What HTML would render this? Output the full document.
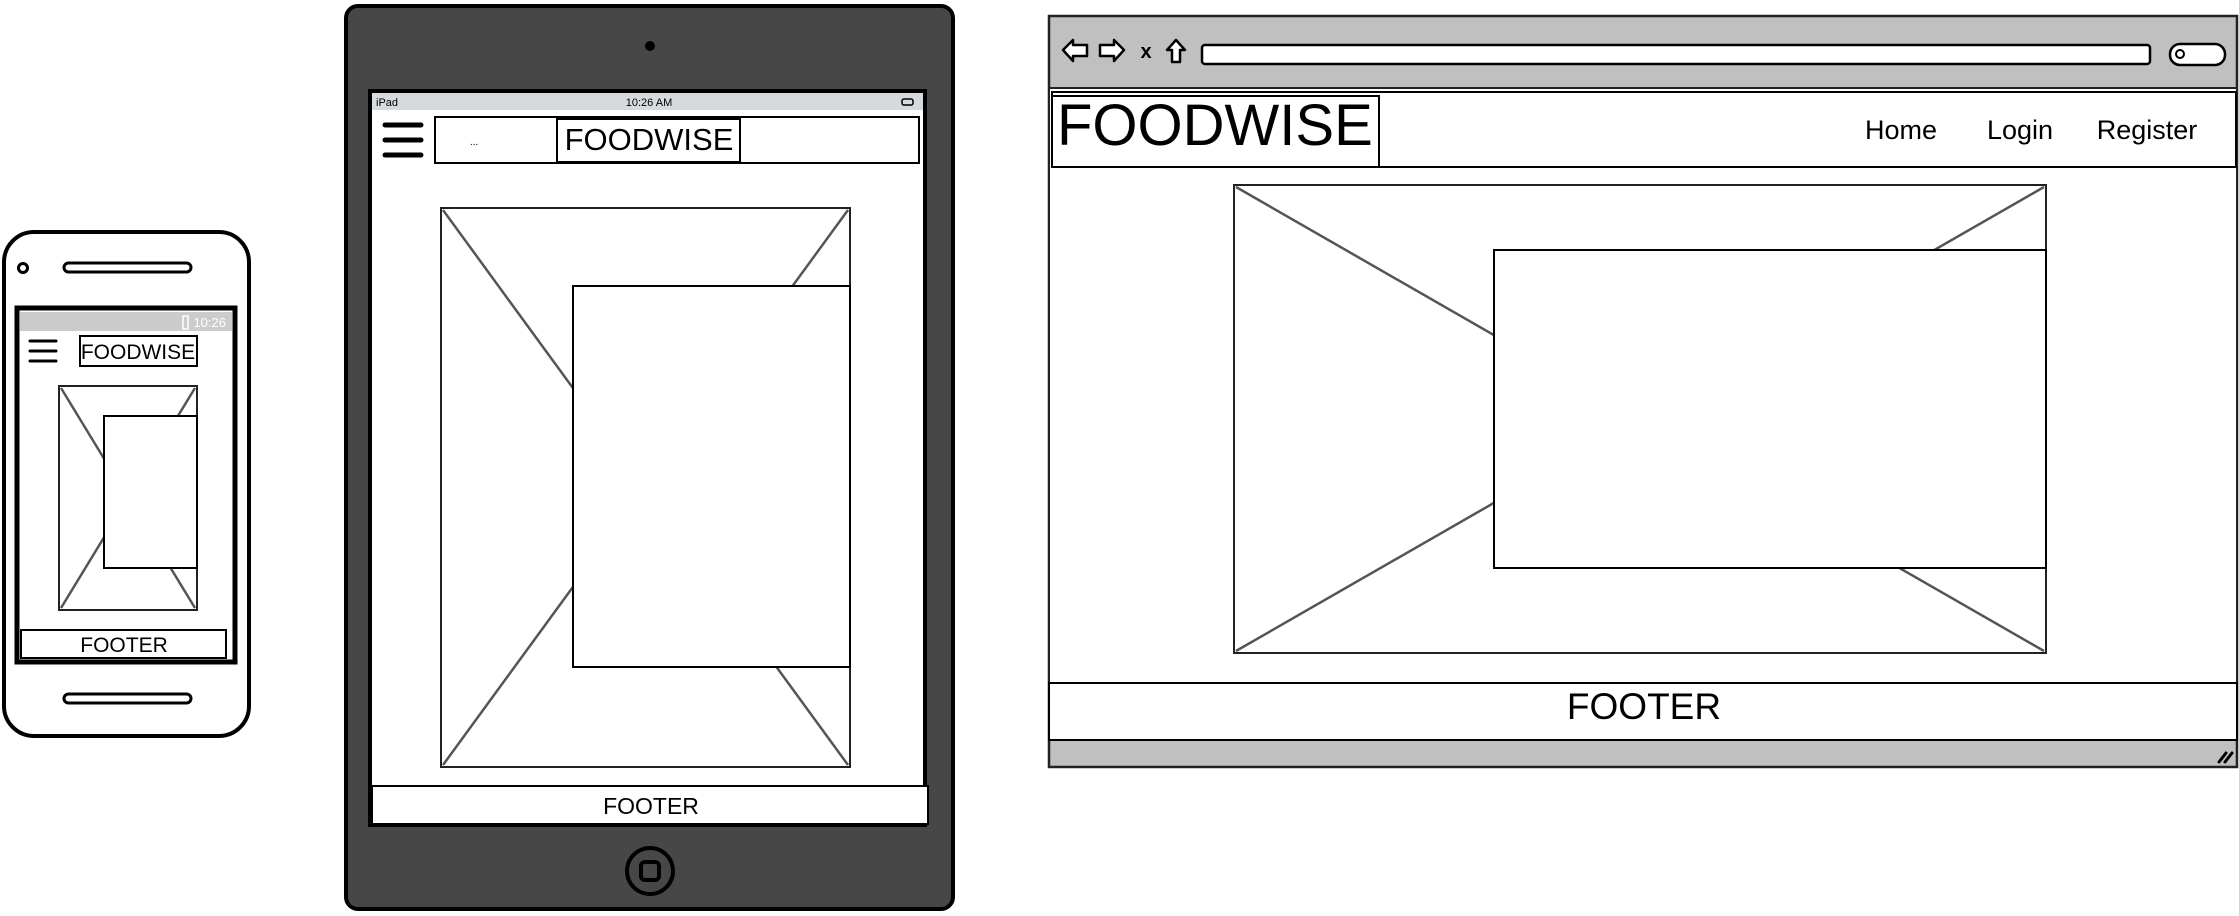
<!DOCTYPE html>
<html><head><meta charset="utf-8"><style>
html,body{margin:0;padding:0;background:#fff;width:2239px;height:916px;overflow:hidden}
svg{display:block}
text{font-family:"Liberation Sans",sans-serif;fill:#000}
</style></head><body>
<svg width="2239" height="916" viewBox="0 0 2239 916" xmlns="http://www.w3.org/2000/svg">
<!-- PHONE -->
<rect x="4" y="232" width="245" height="504" rx="30" fill="#fff" stroke="#000" stroke-width="4"/>
<circle cx="23" cy="268" r="4.5" fill="none" stroke="#000" stroke-width="3"/>
<rect x="64" y="263" width="127" height="9" rx="4.5" fill="#fff" stroke="#000" stroke-width="3"/>
<rect x="64" y="694" width="127" height="9" rx="4.5" fill="#fff" stroke="#000" stroke-width="3"/>
<rect x="17" y="308" width="218" height="354" fill="#fff" stroke="#000" stroke-width="5"/>
<rect x="20" y="312" width="212" height="19" fill="#cccccc"/>
<text x="226" y="327" font-size="13" fill="#fff" text-anchor="end" style="fill:#fff">10:26</text>
<rect x="183" y="316" width="5" height="13" fill="none" stroke="#fff" stroke-width="1.5"/>
<g stroke="#000" stroke-width="3" stroke-linecap="round"><line x1="30" y1="341" x2="56" y2="341"/><line x1="30" y1="351" x2="56" y2="351"/><line x1="30" y1="361" x2="56" y2="361"/></g>
<rect x="80" y="336" width="117" height="30" fill="#fff" stroke="#000" stroke-width="2"/>
<text x="138" y="359" font-size="21" text-anchor="middle">FOODWISE</text>
<rect x="59" y="386" width="138" height="224" fill="#fff" stroke="#222" stroke-width="2"/>
<g stroke="#555" stroke-width="2.5"><line x1="61" y1="388" x2="195" y2="608"/><line x1="195" y1="388" x2="61" y2="608"/></g>
<rect x="104" y="416" width="93" height="152" fill="#fff" stroke="#000" stroke-width="2"/>
<rect x="21" y="630" width="205" height="28" fill="#fff" stroke="#000" stroke-width="2"/>
<text x="124" y="652" font-size="21" text-anchor="middle">FOOTER</text>

<!-- TABLET -->
<rect x="346" y="6" width="607" height="903" rx="12" fill="#474747" stroke="#000" stroke-width="4"/>
<circle cx="650" cy="46" r="5" fill="#000"/>
<rect x="370" y="91" width="555" height="734" fill="#fff" stroke="#000" stroke-width="4"/>
<rect x="372" y="93" width="551" height="17" fill="#d4dadd"/>
<text x="376" y="106" font-size="11">iPad</text>
<text x="649" y="106" font-size="11" text-anchor="middle">10:26 AM</text>
<rect x="902" y="99" width="11" height="6" rx="2" fill="none" stroke="#000" stroke-width="1.5"/>
<g stroke="#000" stroke-width="5" stroke-linecap="round"><line x1="385" y1="125" x2="421" y2="125"/><line x1="385" y1="140" x2="421" y2="140"/><line x1="385" y1="155" x2="421" y2="155"/></g>
<rect x="435" y="117" width="484" height="46" fill="#fff" stroke="#000" stroke-width="2"/>
<text x="470" y="145" font-size="10">...</text>
<rect x="557" y="119" width="183" height="43" fill="#fff" stroke="#000" stroke-width="2"/>
<text x="649" y="150" font-size="31" text-anchor="middle">FOODWISE</text>
<rect x="441" y="208" width="409" height="559" fill="#fff" stroke="#222" stroke-width="2"/>
<g stroke="#555" stroke-width="2.5"><line x1="443" y1="210" x2="848" y2="765"/><line x1="848" y1="210" x2="443" y2="765"/></g>
<rect x="573" y="286" width="277" height="381" fill="#fff" stroke="#000" stroke-width="2"/>
<rect x="372" y="786" width="556" height="38" fill="#fff" stroke="#000" stroke-width="2"/>
<text x="651" y="814" font-size="23" text-anchor="middle">FOOTER</text>
<circle cx="650" cy="871" r="23" fill="none" stroke="#000" stroke-width="4"/>
<rect x="641" y="862" width="18" height="18" rx="4" fill="none" stroke="#000" stroke-width="4"/>

<!-- BROWSER -->
<rect x="1049" y="16" width="1188" height="751" fill="#c0c0c0" stroke="#222" stroke-width="2.5"/>
<rect x="1049" y="88" width="1188" height="652" fill="#fff" stroke="#222" stroke-width="2"/>
<g fill="#fff" stroke="#000" stroke-width="2.5" stroke-linejoin="round">
<path d="M1063 50 L1073 40 L1073 45 L1087 45 L1087 56 L1073 56 L1073 61 Z"/>
<path d="M1124 50 L1114 40 L1114 45 L1100 45 L1100 56 L1114 56 L1114 61 Z"/>
<path d="M1176 40 L1185 50 L1180 50 L1180 62 L1172 62 L1172 50 L1167 50 Z"/>
</g>
<text x="1146" y="58" font-size="20" font-weight="bold" text-anchor="middle">x</text>
<rect x="1202" y="45" width="948" height="19" rx="3" fill="#fff" stroke="#000" stroke-width="2.5"/>
<rect x="2170" y="44" width="55" height="21" rx="10" fill="#fff" stroke="#000" stroke-width="2.5"/>
<circle cx="2180" cy="54" r="4" fill="none" stroke="#000" stroke-width="2"/>
<rect x="1052" y="92" width="1184" height="75" fill="#fff" stroke="#000" stroke-width="2"/>
<rect x="1052" y="96" width="327" height="71" fill="#fff" stroke="#000" stroke-width="2"/>
<text x="1057" y="145" font-size="58">FOODWISE</text>
<text x="1901" y="139" font-size="27" text-anchor="middle">Home</text>
<text x="2020" y="139" font-size="27" text-anchor="middle">Login</text>
<text x="2147" y="139" font-size="27" text-anchor="middle">Register</text>
<rect x="1234" y="185" width="812" height="468" fill="#fff" stroke="#222" stroke-width="2"/>
<g stroke="#555" stroke-width="2.5"><line x1="1236" y1="187" x2="2044" y2="651"/><line x1="2044" y1="187" x2="1236" y2="651"/></g>
<rect x="1494" y="250" width="552" height="318" fill="#fff" stroke="#000" stroke-width="2"/>
<rect x="1049" y="683" width="1188" height="57" fill="#fff" stroke="#000" stroke-width="2"/>
<text x="1644" y="719" font-size="37" text-anchor="middle">FOOTER</text>
<g stroke="#000" stroke-width="3" stroke-linecap="round"><line x1="2219" y1="762" x2="2226" y2="753"/><line x1="2225" y1="762" x2="2232" y2="753"/></g>
</svg>
</body></html>
